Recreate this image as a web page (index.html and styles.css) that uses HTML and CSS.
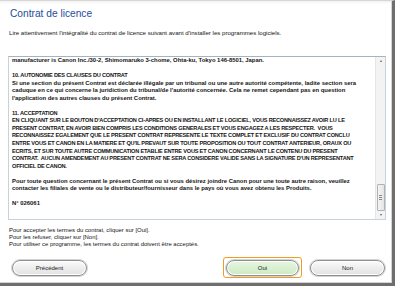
FILE: index.html
```html
<!DOCTYPE html>
<html lang="fr">
<head>
<meta charset="utf-8">
<title>Contrat de licence</title>
<link rel="stylesheet" href="styles.css">
</head>
<body>
<div class="window">
  <h1 class="title">Contrat de licence</h1>
  <p class="intro">Lire attentivement l'intégralité du contrat de licence suivant avant d'installer les programmes logiciels.</p>
  <div class="box">
    <div class="content">
      <p>manufacturer is Canon Inc./30-2, Shimomaruko 3-chome, Ohta-ku, Tokyo 146-8501, Japan.</p>
      <p><span class="caps">10. AUTONOMIE DES CLAUSES DU CONTRAT</span><br>Si une section du présent Contrat est déclarée illégale par un tribunal ou une autre autorité compétente, ladite section sera<br>caduque en ce qui concerne la juridiction du tribunal/de l'autorité concernée. Cela ne remet cependant pas en question<br>l'application des autres clauses du présent Contrat.</p>
      <p class="caps">11. ACCEPTATION<br>EN CLIQUANT SUR LE BOUTON D'ACCEPTATION CI-APRES OU EN INSTALLANT LE LOGICIEL, VOUS RECONNAISSEZ AVOIR LU LE<br>PRESENT CONTRAT, EN AVOIR BIEN COMPRIS LES CONDITIONS GENERALES ET VOUS ENGAGEZ A LES RESPECTER.&nbsp; VOUS<br>RECONNAISSEZ EGALEMENT QUE LE PRESENT CONTRAT REPRESENTE LE TEXTE COMPLET ET EXCLUSIF DU CONTRAT CONCLU<br>ENTRE VOUS ET CANON EN LA MATIERE ET QU'IL PREVAUT SUR TOUTE PROPOSITION OU TOUT CONTRAT ANTERIEUR, ORAUX OU<br>ECRITS, ET SUR TOUTE AUTRE COMMUNICATION ETABLIE ENTRE VOUS ET CANON CONCERNANT LE CONTENU DU PRESENT<br>CONTRAT.&nbsp; AUCUN AMENDEMENT AU PRESENT CONTRAT NE SERA CONSIDERE VALIDE SANS LA SIGNATURE D'UN REPRESENTANT<br>OFFICIEL DE CANON.</p>
      <p class="gap2">Pour toute question concernant le présent Contrat ou si vous désirez joindre Canon pour une toute autre raison, veuillez<br>contacter les filiales de vente ou le distributeur/fournisseur dans le pays où vous avez obtenu les Produits.</p>
      <p>N° 026061</p>
    </div>
    <div class="scrollbar">
      <span class="arrow up"></span>
      <span class="track"></span>
      <span class="thumb"><i></i><i></i><i></i></span>
      <span class="arrow down"></span>
    </div>
  </div>
  <p class="notes">Pour accepter les termes du contrat, cliquer sur [Oui].<br>Pour les refuser, cliquer sur [Non].<br>Pour utiliser ce programme, les termes du contrat doivent être acceptés.</p>
  <div class="actions">
    <button class="btn">Précédent</button>
    <div class="right">
      <span class="focus"><button class="btn btn-yes">Oui</button></span>
      <button class="btn">Non</button>
    </div>
  </div>
</div>
</body>
</html>
```

FILE: styles.css
```css
html, body {
  margin: 0;
  padding: 0;
  background: #ffffff;
}
body {
  width: 395px;
  height: 286px;
  overflow: hidden;
  font-family: "Liberation Sans", Arial, sans-serif;
  color: #141414;
}
.window {
  box-sizing: border-box;
  width: 395px;
  height: 286px;
  border-top: 1px solid #d6d6d6;
  border-right: 3px solid #6e6e6e;
  border-bottom: 3px solid #6e6e6e;
  box-shadow: inset 0 -1px 0 #d4d4d4, inset -1px 0 0 #d4d4d4;
  background: linear-gradient(#f1f1f1, #ffffff 3px);
  display: flex;
  flex-direction: column;
}
.title {
  margin: 0;
  padding: 7px 0 0 10px;
  font-size: 10.2px;
  line-height: 12px;
  font-weight: normal;
  color: #1d4d9c;
}
.intro {
  margin: 0;
  padding: 9px 0 0 9px;
  font-size: 6.1px;
  line-height: 7px;
  white-space: nowrap;
}
.box {
  margin: 20px 0 0 8px;
  width: 378px;
  height: 164px;
  box-sizing: border-box;
  border: 1px solid #c9d2dc;
  border-top-color: #a7b2bf;
  display: flex;
}
.content {
  flex: 1;
  overflow: hidden;
  padding: 0 0 0 3px;
  font-size: 5.9px;
  line-height: 7.55px;
  font-weight: bold;
  white-space: nowrap;
}
.content p {
  margin: 0 0 7.55px;
}
.content p.gap2 {
  margin-top: 7.55px;
}
.caps {
  font-size: 5.6px;
  letter-spacing: -0.2px;
}
.content p.caps {
  line-height: 7.55px;
}
.scrollbar {
  width: 9px;
  background: #f3f3f3;
  border-left: 1px solid #e6e6e6;
  display: flex;
  flex-direction: column;
  align-items: center;
}
.arrow {
  display: block;
  width: 0;
  height: 0;
  border-left: 1.5px solid transparent;
  border-right: 1.5px solid transparent;
}
.arrow.up {
  margin: 3px 0 4px;
  border-bottom: 2px solid #606060;
}
.arrow.down {
  margin: 3px 0 3px;
  border-top: 2px solid #606060;
}
.track {
  flex: 1;
}
.thumb {
  box-sizing: border-box;
  width: 8px;
  height: 27px;
  border: 1px solid #b2b2b2;
  border-radius: 1px;
  background: linear-gradient(90deg, #f4f4f4, #e4e4e4);
  display: flex;
  flex-direction: column;
  align-items: center;
  justify-content: center;
  gap: 1px;
}
.thumb i {
  display: block;
  width: 3px;
  height: 1px;
  background: #8a8a8a;
}
.notes {
  margin: 6.5px 0 0 9px;
  font-size: 5.95px;
  line-height: 7px;
  white-space: nowrap;
}
.actions {
  margin: 9.5px 0 0 0;
  padding: 0 7px 0 12px;
  display: flex;
  justify-content: space-between;
  align-items: center;
}
.right {
  display: flex;
  align-items: center;
  gap: 8px;
}
.btn {
  box-sizing: border-box;
  width: 75px;
  height: 16px;
  margin: 0;
  padding: 0;
  border: 1px solid #8f8f8f;
  border-radius: 8px;
  background: linear-gradient(#fbfbfb, #ececec 55%, #e2e2e2);
  box-shadow: inset 0 0 0 1px #ffffff, 0 0 0 1px #d4d4d4;
  font-family: "Liberation Sans", Arial, sans-serif;
  font-size: 6px;
  color: #1a1a1a;
}
.btn-yes {
  width: 73px;
  background: linear-gradient(#e6f6e0, #d8f0cf 55%, #cfe9c4);
}
.focus {
  display: block;
  padding: 1.5px 2px;
  border: 1.5px solid #f29c1f;
  border-radius: 3px;
}
.focus .btn {
  display: block;
}
```
